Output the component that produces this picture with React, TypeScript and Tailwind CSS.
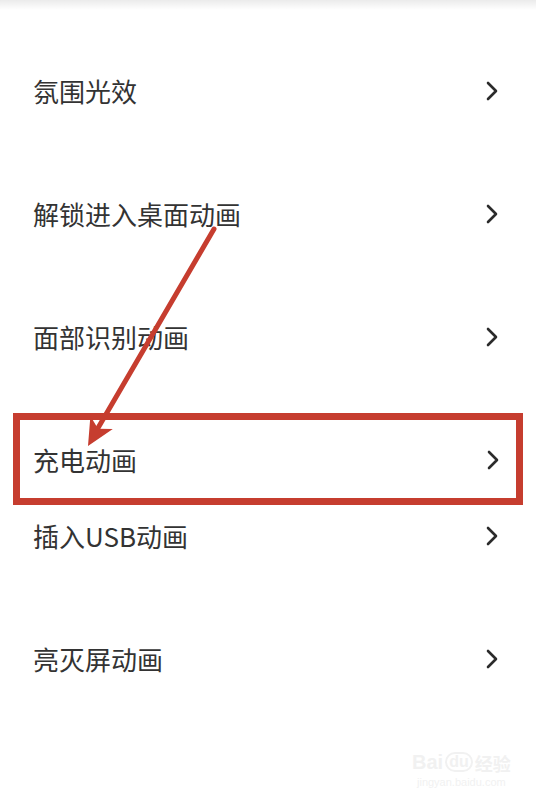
const font = { fontFamily: '"Noto Sans CJK SC", "Noto Sans", sans-serif' };

function Chevron() {
  return (
    <svg width="12" height="20" viewBox="0 0 12 20" className="shrink-0">
      <path d="M2 2 L10 10 L2 18" fill="none" stroke="#2b2b2b" strokeWidth="2.6" strokeLinecap="round" strokeLinejoin="round" />
    </svg>
  );
}

function Row({ label, h }: { label: string; h: string }) {
  return (
    <div className={`flex items-center justify-between pl-[33px] pr-[38px] ${h}`}>
      <span className="text-[26px] text-[#333333] leading-none">{label}</span>
      <Chevron />
    </div>
  );
}

export default function App() {
  return (
    <div className="relative w-[536px] h-[804px] bg-white overflow-hidden" style={font}>
      <div className="h-[10px] bg-gradient-to-b from-[#ebebeb] to-white" />
      <div className="pt-[19px] flex flex-col">
        <Row label="氛围光效" h="h-[123px]" />
        <Row label="解锁进入桌面动画" h="h-[123px]" />
        <Row label="面部识别动画" h="h-[123px]" />
        <div className="pt-[15px] px-[13px]">
          <div className="h-[92px] border-[7px] border-[#c63d2f] flex items-center justify-between pl-[13px] pr-[17px] pt-[2px]">
            <span className="text-[26px] text-[#333333] leading-none">充电动画</span>
            <Chevron />
          </div>
        </div>
        <Row label="插入USB动画" h="h-[62px]" />
        <div className="h-[30px]" />
        <Row label="亮灭屏动画" h="h-[123px]" />
      </div>

      {/* arrow annotation */}
      <svg className="absolute inset-0 pointer-events-none" width="536" height="804" viewBox="0 0 536 804">
        <line x1="214" y1="229" x2="98" y2="428" stroke="#c63d2f" strokeWidth="5" strokeLinecap="round" />
        <polygon points="88,446 90.4,416 98,428.7 112.8,429" fill="#c63d2f" />
      </svg>

      {/* watermark */}
      <div className="absolute left-[412px] top-[752px] flex flex-col items-center text-[#f1f1f1]">
        <div className="flex items-end gap-[2px] leading-none">
          <span className="text-[20px] font-bold" style={{ fontFamily: '"Liberation Sans", sans-serif' }}>Bai</span>
          <span className="text-[16px] font-bold border-2 border-[#f1f1f1] rounded-full px-[2px]" style={{ fontFamily: '"Liberation Sans", sans-serif' }}>du</span>
          <span className="text-[18px] font-bold">经验</span>
        </div>
        <span className="text-[11px] mt-[2px]" style={{ fontFamily: '"Liberation Sans", sans-serif' }}>jingyan.baidu.com</span>
      </div>
    </div>
  );
}
